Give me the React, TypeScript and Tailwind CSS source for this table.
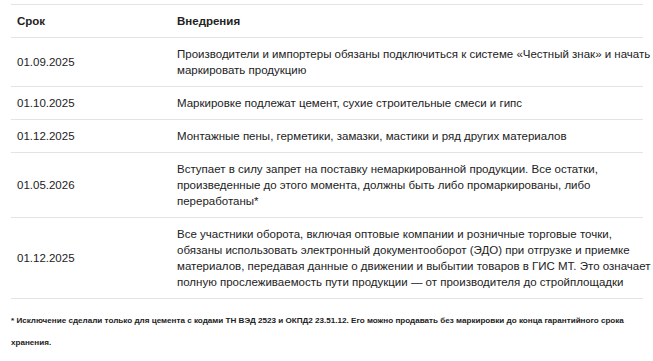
const rows = [
  {
    date: "01.09.2025",
    lines: [
      "Производители и импортеры обязаны подключиться к системе «Честный знак» и начать",
      "маркировать продукцию",
    ],
  },
  {
    date: "01.10.2025",
    lines: ["Маркировке подлежат цемент, сухие строительные смеси и гипс"],
  },
  {
    date: "01.12.2025",
    lines: ["Монтажные пены, герметики, замазки, мастики и ряд других материалов"],
  },
  {
    date: "01.05.2026",
    lines: [
      "Вступает в силу запрет на поставку немаркированной продукции. Все остатки,",
      "произведенные до этого момента, должны быть либо промаркированы, либо",
      "переработаны*",
    ],
  },
  {
    date: "01.12.2025",
    lines: [
      "Все участники оборота, включая оптовые компании и розничные торговые точки,",
      "обязаны использовать электронный документооборот (ЭДО) при отгрузке и приемке",
      "материалов, передавая данные о движении и выбытии товаров в ГИС МТ. Это означает",
      "полную прослеживаемость пути продукции — от производителя до стройплощадки",
    ],
  },
];

export default function App() {
  return (
    <div className="min-h-[361px] w-[653px] bg-white px-[11px] pt-[4px] font-['Liberation_Sans',Arial,sans-serif] text-[#222]">
      <table className="w-[632px] table-fixed border-collapse text-left text-[11.5px] leading-[16px]">
        <colgroup>
          <col className="w-[160px]" />
          <col />
        </colgroup>
        <thead>
          <tr className="border-y border-[#e2e2e8]">
            <th className="px-[6px] py-[8px] font-bold">Срок</th>
            <th className="py-[8px] pl-[6px] pr-0 font-bold">Внедрения</th>
          </tr>
        </thead>
        <tbody>
          {rows.map((row, i) => (
            <tr key={i} className="border-b border-[#e2e2e8]">
              <td className="px-[6px] py-[8px] align-middle">{row.date}</td>
              <td className="py-[8px] pl-[6px] pr-0">
                {row.lines.map((line, j) => (
                  <div key={j} className="whitespace-nowrap">
                    {line}
                  </div>
                ))}
              </td>
            </tr>
          ))}
        </tbody>
      </table>
      <div className="mt-[11px] text-[8.1px] leading-[22px] font-bold text-[#222]">
        <p className="whitespace-nowrap">
          * Исключение сделали только для цемента с кодами ТН ВЭД 2523 и ОКПД2 23.51.12. Его можно продавать без маркировки до конца гарантийного срока
        </p>
        <p>хранения.</p>
      </div>
    </div>
  );
}
